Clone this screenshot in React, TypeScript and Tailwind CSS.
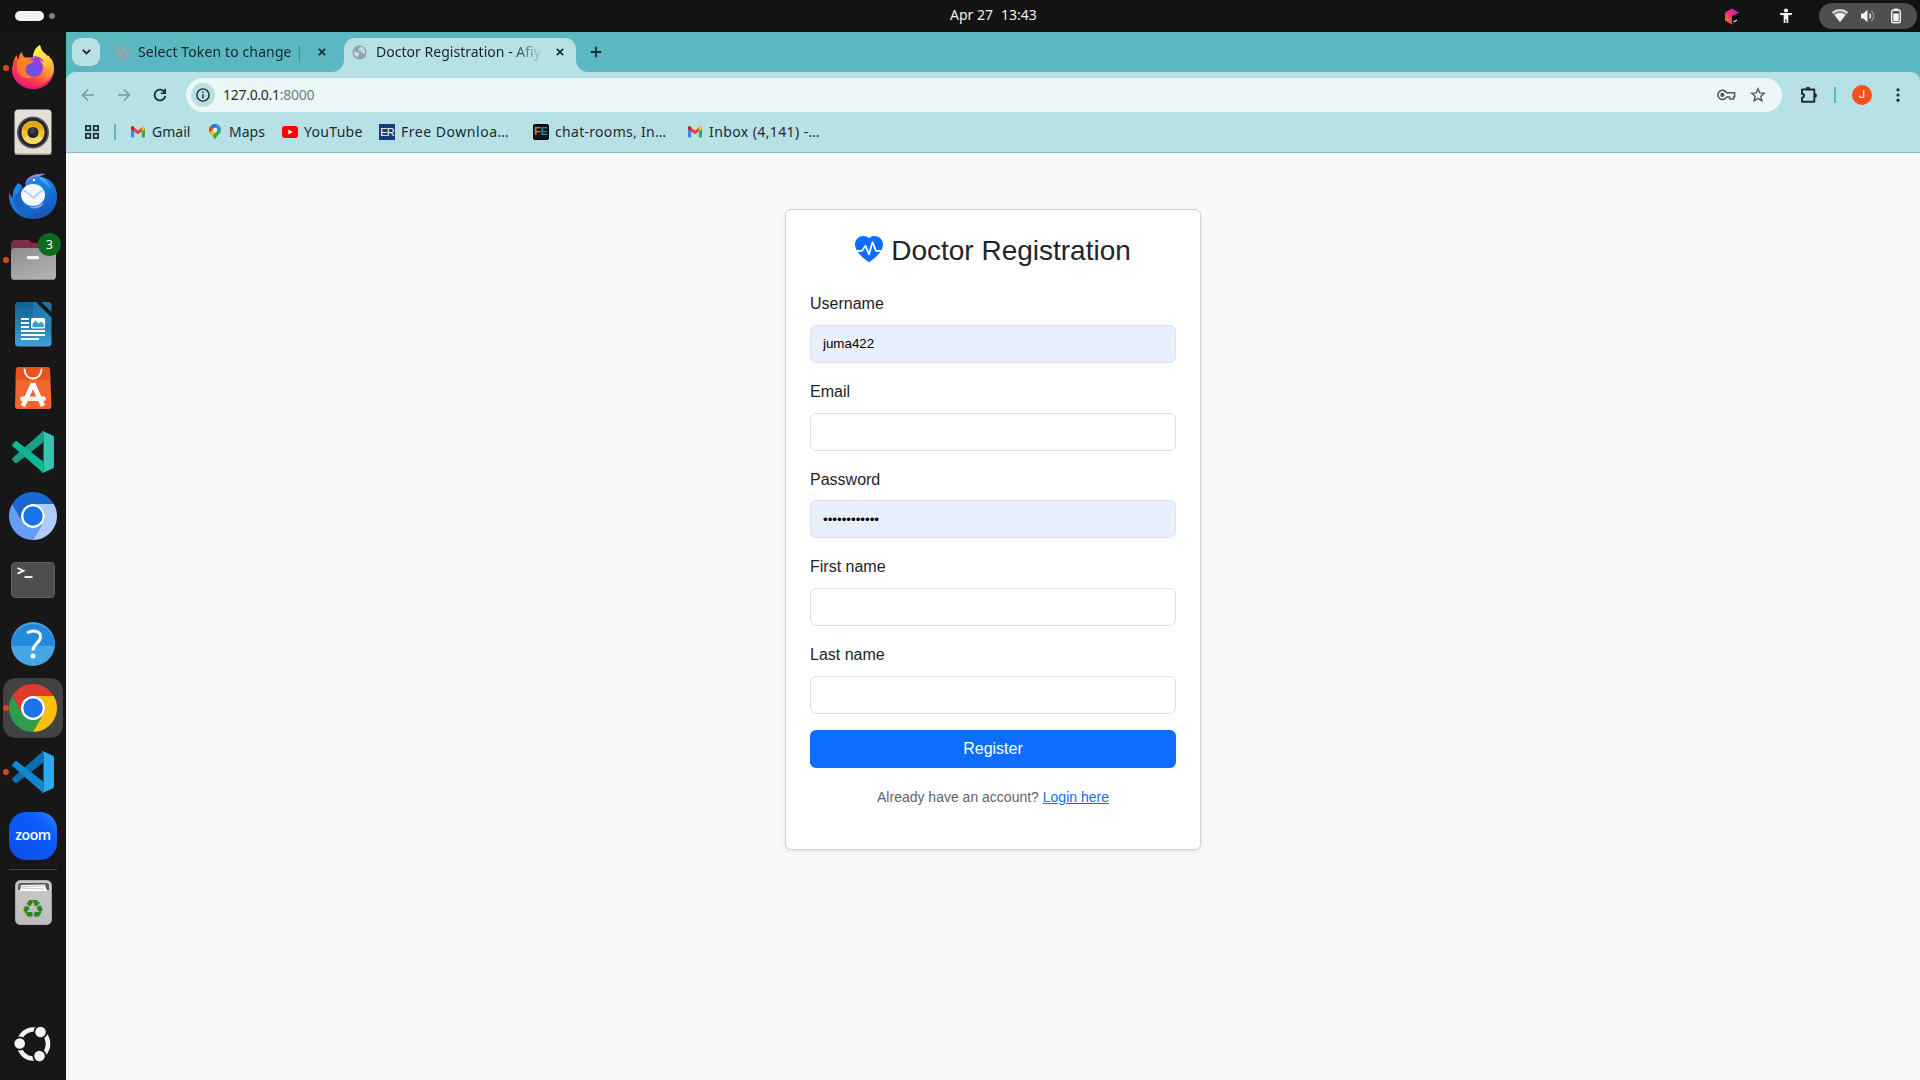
import React from "react";
import { BsHeartPulseFill } from "react-icons/bs";

const UI = "font-['Noto_Sans',sans-serif]";

/* ---------- dock icons ---------- */

const Firefox = () => (
  <svg width="48" height="48" viewBox="0 0 48 48">
    <defs>
      <linearGradient id="ffBody" x1="0.85" y1="0.1" x2="0.2" y2="0.95">
        <stop offset="0" stopColor="#fff44f" />
        <stop offset="0.35" stopColor="#ffa430" />
        <stop offset="0.65" stopColor="#ff4a3c" />
        <stop offset="1" stopColor="#e8157f" />
      </linearGradient>
      <linearGradient id="ffTail" x1="0.4" y1="0" x2="0.7" y2="1">
        <stop offset="0" stopColor="#fff44f" />
        <stop offset="0.5" stopColor="#ffc93a" />
        <stop offset="1" stopColor="#ff7139" stopOpacity="0.2" />
      </linearGradient>
      <radialGradient id="ffOrb" cx="0.45" cy="0.7" r="0.7">
        <stop offset="0" stopColor="#5b5fe6" />
        <stop offset="0.6" stopColor="#8045e0" />
        <stop offset="1" stopColor="#b833e1" />
      </radialGradient>
    </defs>
    <path d="M4 21C4 16 6 13 8 11c0 2 .5 3.500 1.500 4.500C9.500 12 11 9.500 13 8c0 3 1 4 3 5.500h8C24 9 26 4 31 1c1 5 3 7 5.500 9 1 .8 1.500 1.500 2 2l1-.5c1 1 1.500 2 1.500 3l1.500.5C44 18 45 21 45 25c0 11.500-9.500 20-20.500 20S3 36.500 3 26c0-2 .3-3.500 1-5z" fill="url(#ffBody)" />
    <path d="M31 1c1 5 3 7 5.500 9C43 15 45.500 20 45 26c-.5 6-4 11-9 13 3-5 3-12 0-17-3-4-9-5-11.500-8.500C24 9 26 4 31 1z" fill="url(#ffTail)" />
    <circle cx="24.500" cy="23.500" r="9.500" fill="url(#ffOrb)" />
    <path d="M9.500 15.500c3-2 6-2.500 9-.5 2 .5 4 .8 6 1.500-.3 2-2.500 3-5 4-1.500.5-2.500 1.500-2.500 3.500-2 4 3 9 8 8.500-5 3-12 2-15-3-3-5-2-10-.5-14z" fill="#ff8a1e" opacity="0.85" />
    <path d="M24.500 12.500c4-1 9 2 11 6-3-2-5-3-8-2z" fill="#a03be0" />
    <path d="M5 34c5 8 15 10 23 8 8-2 14-7 16.500-14C43.500 38 35 45 24.500 45 15 45 8 40 5 34z" fill="#e3127f" opacity="0.75" />
  </svg>
);

const Rhythmbox = () => (
  <svg width="48" height="48" viewBox="0 0 48 48">
    <rect x="5.500" y="1.500" width="37" height="45" rx="4" fill="#e4dfd5" />
    <rect x="5.500" y="45" width="37" height="1.500" rx="1" fill="#c2bdb3" />
    <circle cx="24" cy="24.500" r="16" fill="#55565c" />
    <circle cx="24" cy="24.500" r="14.500" fill="#242530" />
    <circle cx="24" cy="24.500" r="11.500" fill="#f0c22e" />
    <path d="M14 30a11.500 11.500 0 0 0 20 0l-6-3h-8z" fill="#f8d867" />
    <path d="M13 21a11.500 11.500 0 0 1 22 0l-7 2h-8z" fill="#e5a80e" />
    <circle cx="24" cy="24.500" r="5.500" fill="#25252b" />
    <circle cx="23.500" cy="23" r="3" fill="#3e3e43" />
  </svg>
);

const Thunderbird = () => (
  <svg width="48" height="48" viewBox="0 0 48 48">
    <defs>
      <linearGradient id="tb" x1="0.2" y1="0" x2="0.7" y2="1">
        <stop offset="0" stopColor="#2b8ff0" />
        <stop offset="0.6" stopColor="#1373d9" />
        <stop offset="1" stopColor="#1a53b5" />
      </linearGradient>
    </defs>
    <path d="M0 20c1 3 2 5 4 6-1-6 1-10 5-15 4 2 5 4 5 8l2-4C17 6 24 1 36 2c-2 1-4 1.500-5 2.500C43 6 48 15 48 25c0 12-9 22-24 22C9 47-1 36 0 20z" fill="url(#tb)" />
    <path d="M16 13C17 5 25 1 36 2c-3 1-5 2-7 2.500-6 .5-10 3-13 8.500z" fill="#a97be3" />
    <path d="M31 4.500c5 2 9 6 10 12-4-6-8-7-11-10z" fill="#62b4fb" opacity="0.7" />
    <circle cx="25" cy="8" r="1.300" fill="#fff" />
    <path d="M4 28c3-8 8-8 9-14l3 11c-3 4-1 9 2 13C10 40 6 35 4 28z" fill="#1663c5" />
    <ellipse cx="24" cy="23" rx="12" ry="11" fill="#f3f7fc" />
    <path d="M14 18c4 2 7 5 10.500 8 3-3.500 6-6 9.500-8" fill="none" stroke="#b0cbea" strokeWidth="1.600" />
    <path d="M20 34.500c6 2 11-2 15-4-2 4-6 6-10 6-2 0-4-1-5-2z" fill="#8fa9ec" />
  </svg>
);

const Files = () => (
  <svg width="48" height="48" viewBox="0 0 48 48">
    <defs>
      <linearGradient id="fl" x1="0" y1="0" x2="0.6" y2="1">
        <stop offset="0" stopColor="#8d8d8d" />
        <stop offset="1" stopColor="#b0b0b0" />
      </linearGradient>
    </defs>
    <path d="M6 4h13c2 0 3 3 5 3h18c2 0 4 1.500 4 4v16H2V8c0-2 2-4 4-4z" fill="#7f2c48" />
    <rect x="2" y="12" width="45" height="32" rx="4" fill="url(#fl)" />
    <path d="M4 43.500h41" stroke="#8a8a8a" strokeWidth="1" />
    <rect x="18" y="20" width="12" height="3.200" rx="1" fill="#f6f6f6" />
  </svg>
);

const Writer = () => (
  <svg width="48" height="48" viewBox="0 0 48 48">
    <defs>
      <linearGradient id="wr" x1="0" y1="0" x2="0" y2="1">
        <stop offset="0" stopColor="#115f94" />
        <stop offset="0.5" stopColor="#237fb2" />
        <stop offset="1" stopColor="#3fa3d6" />
      </linearGradient>
    </defs>
    <path d="M9.500 2H27l15.500 15.500V43a3.500 3.500 0 0 1-3.500 3.500H9.500A3.500 3.500 0 0 1 6 43V5.500A3.500 3.500 0 0 1 9.500 2z" fill="url(#wr)" />
    <path d="M24 2h3l15.500 15.500V24H24z" fill="#3a9ccc" opacity="0.35" />
    <path d="M32 2h7a3.500 3.500 0 0 1 3.500 3.500V12z" fill="#1e76a8" />
    <g fill="#fff">
      <path d="M12 18h8v2h-8zM12 22h8v2h-8zM12 26h8v2h-8zM12 30h24v2H12zM12 34h24v2H12zM12 38h18v2H12z" />
      <rect x="22" y="18" width="14" height="10.500" rx="1.500" />
    </g>
    <path d="M23.500 26v-2l3-3.500 3 3 3-2 2.500 3V27H23.500z" fill="#3b9ed0" />
  </svg>
);

const AppCenter = () => (
  <svg width="48" height="48" viewBox="0 0 48 48">
    <path d="M10 3h28a3 3 0 0 1 3 2.700l1.500 36.300a3 3 0 0 1-3 3H9a3 3 0 0 1-3-3L7 5.700A3 3 0 0 1 10 3z" fill="#f1662f" />
    <path d="M10 3h28a3 3 0 0 1 3 2.700L41.500 16h-35L7 5.700A3 3 0 0 1 10 3z" fill="#ed521b" />
    <path d="M15.500 5.500C16 11 19.500 14.500 24 14.500S32 11 32.500 5.500" fill="none" stroke="#fff" strokeWidth="2" strokeLinecap="round" />
    <path d="M24 19.500L14 42M24 19.500L34 42" stroke="#fff" strokeWidth="4.600" />
    <rect x="21.500" y="19" width="5" height="4" rx="1" fill="#fff" />
    <rect x="11" y="32.500" width="26" height="4.500" rx="2.200" fill="#fff0ea" />
  </svg>
);

const Code = ({ back, front, side }: { back: string; front: string; side: string }) => (
  <svg width="42" height="42" viewBox="0 0 100 100">
    <path d="M75 1L73 1 1.500 64c-2 2-2 4 0 6l5.500 5.300c2 1.500 4 1.500 5.500.2L75 27z" fill={back} />
    <path d="M75 99h-2L1.500 36.200c-2-2-2-4 0-6L7 25.200c1.500-1.500 4-1.500 5.500-.2L75 73z" fill={front} />
    <path d="M75 1l22 10c2 1 3 3 3 5v68c0 2-1 4-3 5L75 99c-2 .5-4 .2-5-1 3 1 5-1 5-4V6c0-3-2-5-5-4 1-1 3-1.500 5-1z" fill={side} />
  </svg>
);

const ChromeMark = ({ top, left, right, mid }: { top: string; left: string; right: string; mid: string }) => (
  <svg width="48" height="48" viewBox="0 0 48 48">
    <circle cx="24" cy="24" r="11.500" fill="#fff" />
    <path d="M3.220 12A24 24 0 0 1 44.780 12H24a12 12 0 0 0-10.400 18z" fill={top} />
    <path d="M13.610 30L3.220 12A24 24 0 0 0 24 48l10.400-18a12 12 0 0 1-20.790 0z" fill={left} />
    <path d="M34.390 30L24 48A24 24 0 0 0 44.780 12H24a12 12 0 0 1 10.390 18z" fill={right} />
    <circle cx="24" cy="24" r="12" fill="#fff" />
    <circle cx="24" cy="24" r="9.700" fill={mid} />
  </svg>
);

const Terminal = () => (
  <svg width="48" height="48" viewBox="0 0 48 48">
    <rect x="2.500" y="6.500" width="43" height="35" rx="4" fill="#4d4d4d" stroke="#626262" />
    <path d="M8.500 12l6 2.800-6 2.800" fill="none" stroke="#fff" strokeWidth="1.800" />
    <path d="M15.500 21h8" stroke="#fff" strokeWidth="1.800" />
  </svg>
);

const Help = () => (
  <svg width="48" height="48" viewBox="0 0 48 48">
    <circle cx="24" cy="24" r="22" fill="#46a5e4" />
    <path d="M2 26a22 22 0 0 1 44 0z" fill="#2488dc" />
    <path d="M18 13c7-4 13.500-1.500 13.500 4 0 6-7.500 6.500-7.500 13.500" fill="none" stroke="#fff" strokeWidth="3" />
    <circle cx="24" cy="36" r="2.500" fill="#fff" />
  </svg>
);

const Zoom = () => (
  <div className="flex size-12 items-center justify-center rounded-[17px] bg-gradient-to-bl from-[#2f86ff] via-[#0b5cff] via-30% to-[#0b50e6] pb-[2px] font-['Open_Sans',sans-serif] text-[14px] leading-none font-semibold tracking-[-0.4px] text-white">
    zoom
  </div>
);

const Trash = () => (
  <div className="flex h-[45px] w-[37px] flex-col items-center rounded-[5px] border border-[#a9a9a9] bg-gradient-to-b from-[#c9c9c9] to-[#bdbdbd] pt-0.5">
    <svg width="31" height="9" viewBox="0 0 31 9">
      <path d="M0 3a3 3 0 0 1 3-3h25a3 3 0 0 1 3 3v4H0z" fill="#5b5b5b" />
      <path d="M3 2l24-.5 2 6.500H2z" fill="#fff" />
      <path d="M3 3.500l23-.5M4 5l22 1" stroke="#aaa" strokeWidth="0.700" />
    </svg>
    <span className="mt-[7px] font-['DejaVu_Sans',sans-serif] text-[26px] leading-[20px] text-[#27861c]">♻</span>
  </div>
);

const Ubuntu = () => (
  <svg width="38" height="38" viewBox="0 0 38 38">
    <circle cx="19.500" cy="19" r="14.500" fill="none" stroke="#f4f4f4" strokeWidth="4.600" />
    <g fill="#f4f4f4" stroke="#161616" strokeWidth="1.800">
      <circle cx="26.500" cy="7" r="6.200" />
      <circle cx="5.700" cy="18.500" r="6.200" />
      <circle cx="25.500" cy="31" r="6.200" />
    </g>
  </svg>
);

const Slot = ({ children, running, active, badge }: { children: React.ReactNode; running?: boolean; active?: boolean; badge?: string }) => (
  <div className="relative flex h-16 w-[66px] shrink-0 items-center justify-center">
    <div className={active ? "flex size-[60px] items-center justify-center rounded-[13px] bg-[#424242]" : "flex size-[60px] items-center justify-center"}>
      {children}
    </div>
    {running && <span className="absolute top-[29px] left-[3px] size-[5.500px] rounded-full bg-[#d9491b]" />}
    {badge && (
      <span className="absolute top-[5px] left-[38px] flex size-[23px] items-center justify-center rounded-full bg-[#0e6b1c] font-['Noto_Sans',sans-serif] text-[12px] text-white">
        {badge}
      </span>
    )}
  </div>
);

const Dock = () => (
  <nav className="flex w-[66px] shrink-0 flex-col items-center bg-[#171717] pt-1">
    <Slot running><Firefox /></Slot>
    <Slot><Rhythmbox /></Slot>
    <Slot><Thunderbird /></Slot>
    <Slot running badge="3"><Files /></Slot>
    <Slot><Writer /></Slot>
    <Slot><AppCenter /></Slot>
    <Slot><Code back="#1b9d86" front="#0fb594" side="#35c4ad" /></Slot>
    <Slot><ChromeMark top="#1967d2" left="#669df6" right="#aecbfa" mid="#1a73e8" /></Slot>
    <Slot><Terminal /></Slot>
    <Slot><Help /></Slot>
    <Slot running active><ChromeMark top="#e03a2f" left="#2e9e4b" right="#fbbf0f" mid="#1a73e8" /></Slot>
    <Slot running><Code back="#0a6db4" front="#0f88d0" side="#2aa9f2" /></Slot>
    <Slot><Zoom /></Slot>
    <div className="mt-px h-px w-12 shrink-0 bg-[#464646]" />
    <Slot><Trash /></Slot>
    <div className="mt-auto mb-[17px]"><Ubuntu /></div>
  </nav>
);

/* ---------- desktop top bar ---------- */

const TopBar = () => (
  <header className="flex h-8 shrink-0 items-center bg-[#131313] pr-[3px] pl-[15px]">
    <div className="flex w-[935px] items-center gap-[5px]">
      <span className="h-[10px] w-[29px] rounded-full bg-[#f2f2f2]" />
      <span className="size-[6px] rounded-full bg-[#7e7e7e]" />
    </div>
    <div className={`${UI} flex gap-2 pb-[3px] text-[14px] whitespace-nowrap text-[#f0f0f0]`}>
      <span>Apr 27</span>
      <span>13:43</span>
    </div>
    <div className="ml-auto flex items-center justify-end">
      <svg width="16" height="17" viewBox="0 0 16 17" className="mr-[39px]">
        <defs>
          <linearGradient id="jb" x1="0" y1="1" x2="1" y2="0">
            <stop offset="0" stopColor="#ff8a1d" />
            <stop offset="0.45" stopColor="#ff2a63" />
            <stop offset="1" stopColor="#a020f0" />
          </linearGradient>
        </defs>
        <path d="M1 4.500L8 .5l7 4v7.500l-7 4.500-7-4z" fill="url(#jb)" />
        <path d="M8 8l7-3v7.500L8 16z" fill="#000" />
        <path d="M9.500 14l3.500-2" stroke="#fff" strokeWidth="1.200" />
      </svg>
      <svg width="14" height="16" viewBox="0 0 14 16" className="mr-[26px]" fill="#f2f2f2">
        <circle cx="7" cy="2.500" r="2.100" />
        <path d="M1 5h12v1.700L9.300 7.300V15H7.500v-4h-1v4H4.700V7.300L1 6.700z" />
      </svg>
      <div className="flex h-[26px] w-[98px] items-center rounded-full bg-[#4f4f4f] pl-[13px]">
        <svg width="16" height="14" viewBox="0 0 16 14">
          <path d="M.5 4C4.500 0 11.500 0 15.500 4L8 13z" fill="#8b8b8b" />
          <path d="M.5 4C4.500 0 11.500 0 15.500 4" fill="none" stroke="#f2f2f2" strokeWidth="1.500" />
          <path d="M2.500 6C5.500 3.700 10.500 3.700 13.500 6L8 13z" fill="#f2f2f2" />
        </svg>
        <svg width="16" height="16" viewBox="0 0 16 16" className="ml-[12px]">
          <path d="M1 5.500h2.500L7.500 1.500v13L3.500 10.500H1z" fill="#f2f2f2" />
          <path d="M9.500 5.500c1.300 1.500 1.300 3.500 0 5" fill="none" stroke="#f2f2f2" strokeWidth="1.300" />
          <path d="M11.500 3c2.700 3 2.700 7 0 10" fill="none" stroke="#999" strokeWidth="1.300" />
        </svg>
        <svg width="12" height="16" viewBox="0 0 12 16" className="ml-[14px]">
          <rect x="1.700" y="2.200" width="8.600" height="12.600" rx="1.800" fill="none" stroke="#f2f2f2" strokeWidth="1.400" />
          <rect x="4" y="0.600" width="4" height="1.600" fill="#f2f2f2" />
          <rect x="3.300" y="5.500" width="5.400" height="7.800" fill="#f2f2f2" />
        </svg>
      </div>
    </div>
  </header>
);

/* ---------- browser ---------- */

const Globe = ({ light }: { light: string }) => (
  <svg width="15" height="15" viewBox="0 0 16 16" className="shrink-0">
    <circle cx="8" cy="8" r="7.500" fill="#969fa8" />
    <path d="M2 7c2-.5 3 .5 4.500 1 1.500.3 2 1.500 1 2.500-.5.800-1 1.500-.8 3C3.500 13 1.800 10 2 7zM8 2c2.500-.3 4.500 1 5.500 3.200.8 2 .5 4-.5 5.300-.5-1.500-1.500-2-2.500-2.200C9 8.300 9 7 9.500 6.300c-1 .2-2.300 0-2.500-1C7 4.300 8.500 4 8 2z" fill={light} />
  </svg>
);

const Close = () => (
  <svg width="8" height="8" viewBox="0 0 8 8" className="shrink-0">
    <path d="M.8.800l6.400 6.400M7.200.800L.8 7.200" stroke="#1f2e33" strokeWidth="1.700" />
  </svg>
);

const TabStrip = () => (
  <div className={`${UI} flex h-10 shrink-0 items-end bg-[#5bb7c0] pl-1.5 text-[#16262a]`}>
    <div className="mb-1.5 flex size-7 items-center justify-center rounded-[9px] bg-[#b8e1e5]">
      <svg width="9" height="6" viewBox="0 0 9 6"><path d="M.8.800l3.700 3.700L8.200.800" fill="none" stroke="#1f2528" strokeWidth="1.800" /></svg>
    </div>
    <div className="flex h-[34px] w-[232px] items-center pr-[6px] pb-1.5 pl-[15px]">
      <Globe light="#70b6be" />
      <span className="ml-[8px] w-[168px] pb-0.5 text-[14px] tracking-[0.12px] whitespace-nowrap [mask-image:linear-gradient(to_right,black_150px,transparent_168px)]">
        Select Token to change |
      </span>
      <span className="ml-[12px] flex"><Close /></span>
    </div>
    <svg width="12" height="12" viewBox="0 0 12 12" className="shrink-0"><path d="M12 0v12H0A12 12 0 0 0 12 0z" fill="#b8e1e5" /></svg>
    <div className="flex h-[34px] w-[232px] shrink-0 items-center rounded-t-[11px] bg-[#b8e1e5] pb-1.5 pl-[8px]">
      <Globe light="#b8e1e5" />
      <span className="ml-[9px] w-[168px] pb-0.5 text-[14px] tracking-[0.02px] whitespace-nowrap [mask-image:linear-gradient(to_right,black_135px,transparent_168px)]">
        Doctor Registration - Afiy
      </span>
      <span className="ml-[12px] flex"><Close /></span>
    </div>
    <svg width="12" height="12" viewBox="0 0 12 12" className="shrink-0"><path d="M0 0v12h12A12 12 0 0 1 0 0z" fill="#b8e1e5" /></svg>
    <svg width="12" height="12" viewBox="0 0 12 12" className="mb-[14px] ml-[2px]"><path d="M6 .8v10.400M.8 6h10.400" stroke="#1f2e33" strokeWidth="1.800" /></svg>
  </div>
);

const Arrow = ({ flip }: { flip?: boolean }) => (
  <svg width="14" height="14" viewBox="0 0 14 14" className={flip ? "rotate-180" : ""}>
    <path d="M13 7H2M7 1.500L1.500 7 7 12.500" fill="none" stroke="#7a9ba1" strokeWidth="1.600" />
  </svg>
);

const AddressRow = () => (
  <div className="flex h-[46px] items-center pl-[15px]">
    <Arrow />
    <span className="ml-[22px] flex"><Arrow flip /></span>
    <svg width="14" height="14" viewBox="0 0 14 14" className="ml-[22px]">
      <path d="M11.600 4.200A5.400 5.400 0 1 0 12.300 8" fill="none" stroke="#1f2b2f" strokeWidth="1.800" />
      <path d="M13 .8v5.200H7.800V4.500h3.500V.8z" fill="#1f2b2f" />
    </svg>
    <div className="ml-[19px] flex h-[34px] w-[1596px] items-center rounded-full bg-[#ecf8f8] pr-[16px] pl-[5px]">
      <span className="flex size-6 items-center justify-center rounded-full bg-[#b8e1e5]">
        <svg width="14" height="14" viewBox="0 0 14 14">
          <circle cx="7" cy="7" r="6.100" fill="none" stroke="#1f2b2f" strokeWidth="1.400" />
          <path d="M6.300 6.200h1.400v4.200H6.300zM6.300 3.600h1.400V5H6.300z" fill="#1f2b2f" />
        </svg>
      </span>
      <span className={`${UI} ml-[8px] pb-0.5 text-[14px] tracking-[-0.28px] text-[#1f2b2f]`}>
        127.0.0.1<span className="text-[#6f7c7f]">:8000</span>
      </span>
      <svg width="19" height="12" viewBox="0 0 19 12" className="ml-auto" fill="none" stroke="#4e5a5d" strokeWidth="1.600">
        <path d="M9.600 3.800A4.600 4.600 0 1 0 9.600 8h3v2h4V8h1V3.800z" strokeLinejoin="round" />
        <circle cx="5.400" cy="5.900" r="1.300" fill="#4e5a5d" />
      </svg>
      <svg width="16" height="16" viewBox="0 0 16 16" className="ml-[14px]">
        <path d="M8 1.700l1.700 4.200 4.600.4-3.500 3 1.100 4.500L8 11.400l-3.900 2.400 1.100-4.500-3.500-3 4.600-.4z" fill="none" stroke="#4e5a5d" strokeWidth="1.400" />
      </svg>
    </div>
    <svg width="18" height="18" viewBox="0 0 18 18" className="ml-[18px]">
      <path d="M2 3.500h12.300v12.200H2v-3.900c2.800-.6 2.800-3.500 0-4z" fill="none" stroke="#1f2b2f" strokeWidth="1.900" strokeLinejoin="round" />
      <path d="M5.800 3a2.200 2.200 0 0 1 4.400 0zM14.800 7.300a2.200 2.200 0 0 1 0 4.400z" fill="#1f2b2f" />
    </svg>
    <span className="ml-[16px] h-4 w-[2px] bg-[#5bb7c0]" />
    <span className="ml-[16px] flex size-5 items-center justify-center rounded-full bg-[#f4511e] font-['Roboto',sans-serif] text-[11px] text-white">J</span>
    <svg width="4" height="14" viewBox="0 0 4 14" className="ml-[24px]" fill="#1f2b2f">
      <circle cx="2" cy="1.800" r="1.600" /><circle cx="2" cy="7" r="1.600" /><circle cx="2" cy="12.200" r="1.600" />
    </svg>
  </div>
);

const Gmail = () => (
  <svg width="14" height="12" viewBox="0 0 14 12" className="shrink-0">
    <path d="M0 2v8.500c0 .6.400 1 1 1h2.200V4.500z" fill="#4285f4" />
    <path d="M14 2v8.500c0 .6-.4 1-1 1h-2.200V4.500z" fill="#34a853" />
    <path d="M10.800 1.800v3.600L14 3V1.800C14 .3 12.300-.4 11.300.5z" fill="#fbbc04" />
    <path d="M3.200 5.400V1.500L7 4.400l3.800-2.900v3.900L7 8.300z" fill="#ea4335" />
    <path d="M0 1.800V3l3.200 2.400V1.500L2.700.5C1.700-.4 0 .3 0 1.800z" fill="#c5221f" />
  </svg>
);

const MapPin = () => (
  <svg width="12" height="16" viewBox="0 0 12 16" className="shrink-0">
    <defs><clipPath id="pin"><path d="M6 0a6 6 0 0 1 6 6c0 4-4.500 5-6 10C4.500 11 0 10 0 6a6 6 0 0 1 6-6z" /></clipPath></defs>
    <g clipPath="url(#pin)">
      <rect width="12" height="16" fill="#34a853" />
      <path d="M4-1h9v4L8 7z" fill="#4285f4" />
      <path d="M2-1h7L4 5z" fill="#1a73e8" />
      <path d="M-1 10l5-6 3 4-5 6z" fill="#fbbc04" />
      <path d="M-1 1l2 0 4 3.500L-1 10z" fill="#ea4335" />
    </g>
    <circle cx="6" cy="6" r="2.200" fill="#fff" />
  </svg>
);

const YouTube = () => (
  <svg width="16" height="12" viewBox="0 0 16 12" className="shrink-0">
    <rect width="16" height="12" rx="3" fill="#f00" />
    <path d="M6.300 3.400L10.800 6l-4.500 2.600z" fill="#fff" />
  </svg>
);

const Bookmark = ({ icon, text, cls }: { icon: React.ReactNode; text: string; cls: string }) => (
  <div className={`flex items-center ${cls}`}>
    {icon}
    <span className="pb-0.5 whitespace-nowrap">{text}</span>
  </div>
);

const BookmarksBar = () => (
  <div className={`${UI} flex h-[34px] items-center pb-[6px] pl-[18px] text-[14px] text-[#1c2b2f]`}>
    <svg width="16" height="16" viewBox="0 0 16 16" fill="none" stroke="#1f2b2f" strokeWidth="1.700">
      <rect x="1.900" y="1.900" width="4.400" height="4.400" /><rect x="9.700" y="1.900" width="4.400" height="4.400" />
      <rect x="1.900" y="9.700" width="4.400" height="4.400" /><rect x="9.700" y="9.700" width="4.400" height="4.400" />
    </svg>
    <span className="ml-[14px] h-4 w-[2px] bg-[#5bb7c0]" />
    <Bookmark cls="ml-[15px] w-[78px] gap-[7px]" icon={<Gmail />} text="Gmail" />
    <Bookmark cls="w-[73px] gap-[8px]" icon={<MapPin />} text="Maps" />
    <Bookmark cls="w-[97px] gap-[6px] tracking-[0.3px]" icon={<YouTube />} text="YouTube" />
    <Bookmark
      cls="w-[154px] gap-[6px] tracking-[0.53px]"
      icon={<span className="flex size-4 shrink-0 items-center justify-center border border-[#123f78] bg-[#123f78] font-['Liberation_Sans',sans-serif] text-[11px] leading-none tracking-[-1px] text-white">ER</span>}
      text="Free Downloa…"
    />
    <Bookmark
      cls="w-[155px] gap-[6px] tracking-[0.3px]"
      icon={
        <span className="flex size-4 shrink-0 items-center justify-center rounded-[2px] border border-black bg-[#141414] pb-px font-['Liberation_Sans',sans-serif] text-[11px] leading-none font-bold tracking-normal">
          <span className="text-[#c8743a]">F</span><span className="text-[#1a86bd]">E</span>
        </span>
      }
      text="chat-rooms, In…"
    />
    <Bookmark cls="gap-[7px] tracking-[0.4px]" icon={<Gmail />} text="Inbox (4,141) -…" />
  </div>
);

/* ---------- registration page ---------- */

const FIELDS = [
  { label: "Username", value: "juma422", type: "text" },
  { label: "Email", value: "", type: "text" },
  { label: "Password", value: "passwordpass", type: "password" },
  { label: "First name", value: "", type: "text" },
  { label: "Last name", value: "", type: "text" },
];

const RegistrationCard = () => (
  <section className="flex h-[641px] w-[416px] flex-col rounded-[6px] border border-[#d2d3d4] bg-white px-6 pt-6 font-['Liberation_Sans',Arial,sans-serif] text-[#212529] shadow-[0_2px_4px_rgba(0,0,0,0.075)]">
    <h1 className="flex h-[33.600px] items-center justify-center text-[28px] leading-[33.600px]">
      <BsHeartPulseFill className="mr-2 mb-[2px] size-7 shrink-0" color="#0d6efd" />
      Doctor Registration
    </h1>
    <form className="mt-[24.500px] flex flex-col">
      {FIELDS.map((f) => (
        <div key={f.label} className="mb-[16.900px] flex flex-col">
          <label className="mb-[8.850px] leading-6">{f.label}</label>
          <input
            type={f.type}
            defaultValue={f.value}
            className={
              f.value
                ? "h-[38px] rounded-[6px] border border-[#dee2e6] bg-[#e8f0fe] px-3 text-[13.333px] text-black"
                : "h-[38px] rounded-[6px] border border-[#dee2e6] bg-white px-3 text-[13.333px] text-black"
            }
          />
        </div>
      ))}
      <button type="button" className="-mt-[0.900px] h-[38px] rounded-[6px] bg-[#0d6efd] text-[16px] text-white">Register</button>
    </form>
    <p className="mt-[18.900px] text-center text-[14px] leading-[21px] text-[#5f666c]">
      Already have an account? <a className="text-[#0d6efd] underline">Login here</a>
    </p>
  </section>
);

export default function App() {
  return (
    <div className="flex h-[1080px] w-[1920px] flex-col overflow-hidden">
      <TopBar />
      <div className="flex min-h-0 flex-1">
        <Dock />
        <main className="flex flex-1 flex-col bg-[#5bb7c0]">
          <TabStrip />
          <div className="h-[81px] shrink-0 rounded-t-[9px] border-b border-[#8fb5ba] bg-[#b8e1e5]">
            <AddressRow />
            <BookmarksBar />
          </div>
          <div className="flex flex-1 items-start justify-center bg-[#f8f9fb] pt-14">
            <RegistrationCard />
          </div>
        </main>
      </div>
    </div>
  );
}
